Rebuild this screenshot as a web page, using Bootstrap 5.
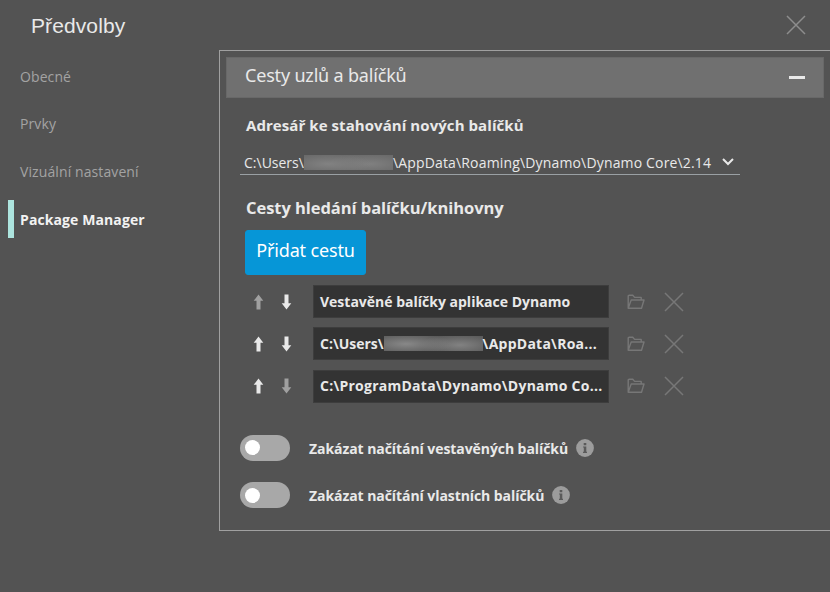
<!DOCTYPE html>
<html lang="cs">
<head>
<meta charset="utf-8">
<title>Předvolby</title>
<link href="https://cdn.jsdelivr.net/npm/bootstrap@5.3.0/dist/css/bootstrap.min.css" rel="stylesheet">
<style>
html, body { height: 592px; overflow: hidden; }
body { background: #535353; color: #e9e9e9; font-family: "Open Sans", "Noto Sans", sans-serif; font-size: 14px; line-height: 20px; white-space: nowrap; }
svg { display: block; flex: none; }
.dialog-head { height: 50px; padding: 0 24px 0 31px; }
.dialog-title { font: 21px/26px "Liberation Sans", sans-serif; letter-spacing: .1px; padding-top: 2px; }
.close-btn { color: #8d8d8d; }
.side-nav { width: 219px; padding-left: 8px; padding-top: 7.5px; letter-spacing: .1px; }
.side-nav .nav-link { height: 38px; margin-bottom: 9.6px; padding: 0 0 0 6px; border-left: 6px solid transparent; color: #a3a3a3; border-radius: 0; display: flex; align-items: center; }
.side-nav .nav-link.active { color: #f2f2f2; border-left-color: #ade4de; font-weight: 700; padding-top: 1px; }
.panel { width: 611px; height: 481px; border: solid #a0a0a0; border-width: 1px 0 1px 1px; padding: 6px 6px 0; }
.panel-bar { height: 41px; background: #707070; border: 1px solid #686868; padding: 0 18px; }
.panel-bar-title { font: 18px/24px "Noto Sans", sans-serif; letter-spacing: -.18px; padding-bottom: 6px; }
.panel-content { padding: 0 14px; }
.dir-label { font-size: 15px; font-weight: 700; letter-spacing: .07px; margin: 17px 0 0 6px; }
.dir-select { width: 500px; height: 30px; margin-top: 10px; padding: 6px 6px 0 4px; border-bottom: 1px solid #9aa0a4; }
.dir-tail { letter-spacing: .16px; }
.paths-label { font-size: 16.5px; line-height: 24px; font-weight: 700; letter-spacing: -.05px; margin: 21px 0 0 6px; }
.add-btn { --bs-btn-bg: #0696d7; --bs-btn-border-color: #0696d7; --bs-btn-border-radius: 3px; --bs-btn-color: #fff; width: 121px; height: 45px; margin: 10px 0 10px 5px; padding: 0 0 5px; font: 18px/24px "Noto Sans", sans-serif; letter-spacing: -.15px; }
.path-row { height: 33px; margin-bottom: 9.4px; padding-left: 11px; }
.move-up { margin-right: 13px; }
.is-off { color: #a0a0a0; }
.path-box { width: 296px; height: 33px; background: #333; border: 1px solid #3d3d3d; margin: 0 18px 0 19px; padding-left: 6px; font-weight: 700; }
.path-tail { letter-spacing: .25px; }
.path-wide { letter-spacing: .25px; }
.row-tool { color: #777; }
.row-tool + .row-tool { margin-left: 19px; }
.redacted { height: 15px; flex: none; }
.redacted-a { width: 89px; background: radial-gradient(ellipse 44px 11px at 24px 9px, #828282, transparent), radial-gradient(ellipse 44px 11px at 66px 9px, #808080, transparent), #686868; }
.redacted-b { width: 99px; background: radial-gradient(ellipse 46px 11px at 22px 8px, #888, transparent), radial-gradient(ellipse 40px 11px at 76px 9px, #828282, transparent), #585858; }
.switches { padding-top: 22.6px; }
.switch-row { height: 26px; margin-bottom: 21.5px; }
.switch-track { width: 50px; height: 26px; border-radius: 13px; background: #a8a8a8; padding-left: 5px; margin-right: 19px; }
.switch-knob { width: 15px; height: 15px; border-radius: 50%; background: #fff; }
.switch-label { font-weight: 700; letter-spacing: -.07px; margin-right: 8px; padding-top: 2px; }
</style>
</head>
<body>
<svg class="d-none">
  <symbol id="arrow-up" viewBox="0 0 15 16"><path d="M7.5.5 12.3 6.8H9.5V15.5H5.5V6.8H2.7Z" fill="currentColor"/></symbol>
  <symbol id="arrow-down" viewBox="0 0 15 16"><path d="M7.5 15.5 12.3 9.2H9.5V.5H5.5V9.2H2.7Z" fill="currentColor"/></symbol>
  <symbol id="folder" viewBox="0 0 18 16"><path d="M1.2 14.3V2.2Q1.2 1.3 2.2 1.3H5.8L7.6 3.4H14.2V6M1.2 14.3 4.2 6H17L14.5 14.3Z" fill="none" stroke="currentColor" stroke-width="1.4" stroke-linejoin="round"/></symbol>
  <symbol id="cross" viewBox="0 0 20 20"><path d="M1 1 19 19M19 1 1 19" fill="none" stroke="currentColor" stroke-width="1.5"/></symbol>
  <symbol id="info" viewBox="0 0 18 18"><circle cx="9" cy="9" r="8.9" fill="#9c9c9c"/><path d="M7.7 4H10.3V6.2H7.7ZM7.1 7.4H10.3V12.8H11V14H7V12.8H7.8V8.6H7.1Z" fill="#5a5a5a"/></symbol>
</svg>
<header class="dialog-head d-flex align-items-center justify-content-between">
  <div class="dialog-title">Předvolby</div>
  <svg class="close-btn" width="20" height="20"><use href="#cross"/></svg>
</header>
<main class="d-flex">
  <nav class="side-nav nav flex-column flex-nowrap flex-shrink-0">
    <a class="nav-link">Obecné</a>
    <a class="nav-link">Prvky</a>
    <a class="nav-link">Vizuální nastavení</a>
    <a class="nav-link active">Package Manager</a>
  </nav>
  <section class="panel flex-shrink-0">
    <div class="panel-bar d-flex align-items-center justify-content-between">
      <span class="panel-bar-title">Cesty uzlů a balíčků</span>
      <svg width="16" height="3"><path d="M0 0H16V3H0Z" fill="#e9e9e9"/></svg>
    </div>
    <div class="panel-content">
      <div class="dir-label">Adresář ke stahování nových balíčků</div>
      <div class="dir-select d-flex align-items-center">
        <span>C:\Users\</span><span class="redacted redacted-a"></span><span class="dir-tail">\AppData\Roaming\Dynamo\Dynamo Core\2.14</span>
        <svg class="ms-auto" width="12" height="9"><path d="M1 1 6 6 11 1" fill="none" stroke="#e9e9e9" stroke-width="2"/></svg>
      </div>
      <div class="paths-label">Cesty hledání balíčku/knihovny</div>
      <button class="btn add-btn d-block">Přidat cestu</button>
      <div class="path-row d-flex align-items-center">
        <svg class="move-up is-off" width="15" height="16"><use href="#arrow-up"/></svg>
        <svg width="15" height="16"><use href="#arrow-down"/></svg>
        <div class="path-box d-flex align-items-center flex-shrink-0">Vestavěné balíčky aplikace Dynamo</div>
        <svg class="row-tool" width="18" height="16"><use href="#folder"/></svg>
        <svg class="row-tool" width="20" height="20"><use href="#cross"/></svg>
      </div>
      <div class="path-row d-flex align-items-center">
        <svg class="move-up" width="15" height="16"><use href="#arrow-up"/></svg>
        <svg width="15" height="16"><use href="#arrow-down"/></svg>
        <div class="path-box d-flex align-items-center flex-shrink-0"><span>C:\Users\</span><span class="redacted redacted-b"></span><span class="path-tail">\AppData\Roa...</span></div>
        <svg class="row-tool" width="18" height="16"><use href="#folder"/></svg>
        <svg class="row-tool" width="20" height="20"><use href="#cross"/></svg>
      </div>
      <div class="path-row d-flex align-items-center">
        <svg class="move-up" width="15" height="16"><use href="#arrow-up"/></svg>
        <svg class="is-off" width="15" height="16"><use href="#arrow-down"/></svg>
        <div class="path-box path-wide d-flex align-items-center flex-shrink-0">C:\ProgramData\Dynamo\Dynamo Co...</div>
        <svg class="row-tool" width="18" height="16"><use href="#folder"/></svg>
        <svg class="row-tool" width="20" height="20"><use href="#cross"/></svg>
      </div>
      <div class="switches">
        <div class="switch-row d-flex align-items-center">
          <div class="switch-track d-flex align-items-center"><div class="switch-knob"></div></div>
          <span class="switch-label">Zakázat načítání vestavěných balíčků</span>
          <svg width="18" height="18"><use href="#info"/></svg>
        </div>
        <div class="switch-row d-flex align-items-center">
          <div class="switch-track d-flex align-items-center"><div class="switch-knob"></div></div>
          <span class="switch-label">Zakázat načítání vlastních balíčků</span>
          <svg width="18" height="18"><use href="#info"/></svg>
        </div>
      </div>
    </div>
  </section>
</main>
<script src="https://cdn.jsdelivr.net/npm/bootstrap@5.3.0/dist/js/bootstrap.bundle.min.js"></script>
</body>
</html>
